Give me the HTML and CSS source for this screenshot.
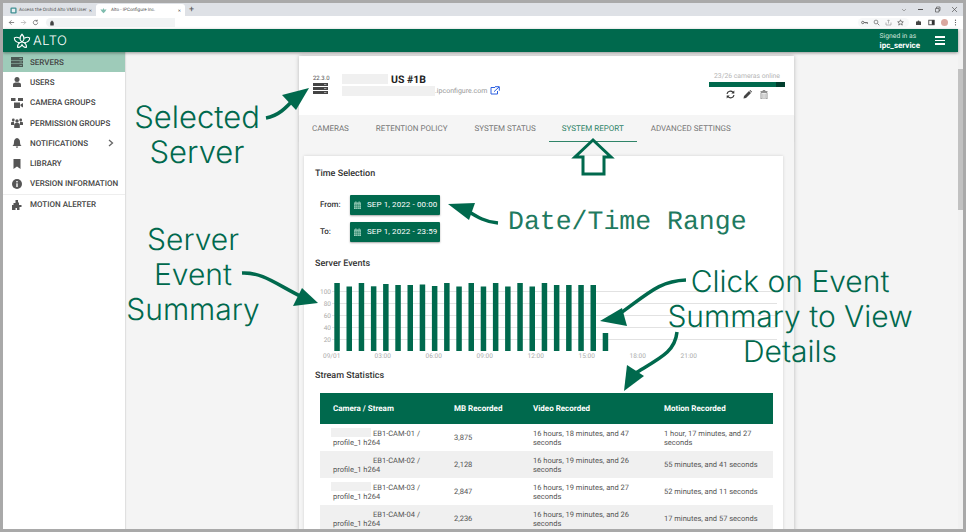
FILE: index.html
```html
<!DOCTYPE html>
<html lang="en">
<head>
    <meta charset="UTF-8">
    <meta name="viewport" content="width=device-width, initial-scale=1.0">
    <title>Alto - IPConfigure Inc.</title>
    <link rel="stylesheet" href="styles.css">
</head>
<body>
    <div class="window">
        <div class="tabbar">
            <div class="tab">
                <svg class="favicon" viewBox="0 0 8 8"><rect x="0.5" y="0.5" width="7" height="7" rx="1.5" fill="#3f8f93"/><rect x="2" y="2" width="4" height="4" fill="#e8eef0"/></svg>
                <span class="tab-title">Access the Orchid Alto VMS User</span>
                <span class="tab-close">&#10005;</span>
            </div>
            <div class="tab tab-active">
                <svg class="favicon" viewBox="0 0 8 8"><path d="M4 1 5 3 7.500 2.500 6 5 4 7 2 5 .5 2.500 3 3Z" fill="#7fbcae"/></svg>
                <span class="tab-title">Alto - IPConfigure Inc.</span>
                <span class="tab-close">&#10005;</span>
            </div>
            <span class="new-tab">+</span>
            <div class="window-buttons">
                <svg width="6" height="6" viewBox="0 0 6 6"><path d="M1 2 3 4 5 2" fill="none" stroke="#888" stroke-width=".7"/></svg>
                <svg width="7" height="7" viewBox="0 0 7 7"><path d="M1 3.500H6" stroke="#444" stroke-width=".9"/></svg>
                <svg width="7" height="7" viewBox="0 0 7 7"><path d="M1.500 2.500H5V6H1.500ZM2.500 2.500V1H6V4.500H5" fill="none" stroke="#555" stroke-width=".7"/></svg>
                <svg width="7" height="7" viewBox="0 0 7 7"><path d="M1 1 6 6M6 1 1 6" stroke="#555" stroke-width=".7"/></svg>
            </div>
        </div>
        <div class="toolbar">
            <svg class="nav-icon" viewBox="0 0 8 8"><path d="M7 4H1.500M4 1.500 1.500 4 4 6.500" fill="none" stroke="#555" stroke-width=".8"/></svg>
            <svg class="nav-icon" viewBox="0 0 8 8"><path d="M1 4H6.500M4 1.500 6.500 4 4 6.500" fill="none" stroke="#aaa" stroke-width=".8"/></svg>
            <svg class="nav-icon" viewBox="0 0 8 8"><path d="M6.500 4A2.500 2.500 0 1 1 5.700 2.200M6 .8V2.500H4.300" fill="none" stroke="#555" stroke-width=".8"/></svg>
            <div class="omnibox">
                <svg width="6" height="6" viewBox="0 0 6 6"><path d="M1.500 2.600H4.500V5.200H1.500ZM2.100 2.600V1.800A.9.900 0 0 1 3.900 1.800V2.600" fill="#444" stroke="#444" stroke-width=".5"/></svg>
            </div>
            <div class="toolbar-right">
                <div class="omni-end">
                    <svg width="7" height="7" viewBox="0 0 7 7"><circle cx="1.800" cy="3.500" r="1.200" fill="none" stroke="#555" stroke-width=".8"/><path d="M3 3.500H6.500V4.800M5 3.500V4.600" fill="none" stroke="#555" stroke-width=".8"/></svg>
                    <svg width="7" height="7" viewBox="0 0 7 7"><circle cx="3" cy="3" r="1.900" fill="none" stroke="#666" stroke-width=".7"/><path d="M4.400 4.400 6.300 6.300" stroke="#666" stroke-width=".8"/></svg>
                    <svg width="7" height="7" viewBox="0 0 7 7"><path d="M1 3.500V6H6V3.500M3.500 4.500V1M2.300 2 3.500 .8 4.700 2" fill="none" stroke="#999" stroke-width=".7"/></svg>
                    <svg width="7" height="7" viewBox="0 0 7 7"><path d="M3.500 .8 4.300 2.700 6.300 2.800 4.800 4.100 5.300 6.100 3.500 5 1.700 6.100 2.200 4.100 .7 2.800 2.700 2.700Z" fill="none" stroke="#555" stroke-width=".7"/></svg>
                </div>
                <svg width="7" height="7" viewBox="0 0 7 7"><path d="M1 2.500H2.500A1 1 0 0 1 4.500 2.500H6V6H1Z" fill="#444"/></svg>
                <svg width="7" height="7" viewBox="0 0 7 7"><rect x=".8" y="1.200" width="5.400" height="4.600" fill="none" stroke="#333" stroke-width=".8"/><rect x="3.800" y="1.200" width="2.400" height="4.600" fill="#333"/></svg>
                <span class="avatar"></span>
                <svg width="3" height="7" viewBox="0 0 3 7"><circle cx="1.500" cy="1.200" r=".6" fill="#444"/><circle cx="1.500" cy="3.500" r=".6" fill="#444"/><circle cx="1.500" cy="5.800" r=".6" fill="#444"/></svg>
            </div>
        </div>

        <div class="app">
            <div class="app-col">
                <header class="app-header">
                    <div class="logo">
                        <svg width="18" height="16" viewBox="0 0 20 17" fill="none" stroke="#fff" stroke-width="1.200"><path d="M10 1C8 3 7.500 5 8 7 8.500 8.500 9.300 9 10 9.500 10.700 9 11.500 8.500 12 7 12.500 5 12 3 10 1Z"/><path d="M7.500 5.500C5 4 3 4 1.500 5 1.500 8 3.500 10 7 10.500 8.200 10.500 9 10 10 9.500 11 10 11.800 10.500 13 10.500 16.500 10 18.500 8 18.500 5 17 4 15 4 12.500 5.500"/><path d="M7.500 10.500C5.500 11.500 5 13 5 15.500 7.500 16 9 15 10 12.500 11 15 12.500 16 15 15.500 15 13 14.500 11.500 12.500 10.500"/></svg>
                        <span class="logo-text">ALTO</span>
                    </div>
                    <div class="signed-in">
                        <span class="signed-label">Signed in as</span>
                        <span class="signed-user">ipc_service</span>
                    </div>
                    <div class="hamburger"><span></span><span></span><span></span></div>
                </header>

                <div class="main">
                    <nav class="sidebar">
                        <a class="nav-item nav-selected">
                            <svg class="side-icon" viewBox="0 0 12 10"><path d="M0 0H12V3H0ZM0 3.500H12V6.500H0ZM0 7H12V10H0Z" fill="#4c5a55"/><path d="M8.500 1.500H11M8.500 5H11M8.500 8.500H11" stroke="#9ecbb9" stroke-width=".6"/></svg>
                            SERVERS
                        </a>
                        <a class="nav-item">
                            <svg class="side-icon" viewBox="0 0 12 10"><circle cx="6" cy="2.500" r="2.500" fill="#555"/><path d="M2 10V7.500C2 6 3.500 5.500 6 5.500S10 6 10 7.500V10Z" fill="#555"/></svg>
                            USERS
                        </a>
                        <a class="nav-item">
                            <svg class="side-icon" viewBox="0 0 12 10"><path d="M0 0H4.500V3H0ZM7 0H12V3H7ZM3 4.500H9V10H3ZM9.500 6.500 12 5V9.500L9.500 8Z" fill="#555"/></svg>
                            CAMERA GROUPS
                        </a>
                        <a class="nav-item">
                            <svg class="side-icon" viewBox="0 0 12 10"><circle cx="6" cy="3" r="1.700" fill="#555"/><circle cx="2.300" cy="2" r="1.400" fill="#555"/><circle cx="9.700" cy="2" r="1.400" fill="#555"/><path d="M0 7V5C0 4 1 3.800 3 3.800V7ZM12 7V5C12 4 11 3.800 9 3.800V7ZM3.200 10V6.500C3.200 5.300 4.500 5 6 5S8.800 5.300 8.800 6.500V10Z" fill="#555"/></svg>
                            PERMISSION GROUPS
                        </a>
                        <a class="nav-item">
                            <svg class="side-icon" viewBox="0 0 12 10"><path d="M6 0C4 .6 3 2 3 4 3 6 2.500 7 1.500 8H10.500C9.500 7 9 6 9 4 9 2 8 .6 6 0ZM4.800 8.500A1.200 1.200 0 0 0 7.200 8.500Z" fill="#555"/></svg>
                            NOTIFICATIONS
                            <svg class="chevron" viewBox="0 0 6 8"><path d="M1 1 4.500 4 1 7" fill="none" stroke="#666" stroke-width="1.300"/></svg>
                        </a>
                        <a class="nav-item">
                            <svg class="side-icon" viewBox="0 0 12 10"><path d="M2.500 0H9.500V10L6 7.500 2.500 10Z" fill="#555"/></svg>
                            LIBRARY
                        </a>
                        <a class="nav-item">
                            <svg class="side-icon" viewBox="0 0 12 10"><circle cx="6" cy="5" r="5" fill="#555"/><rect x="5.300" y="4.300" width="1.400" height="3.700" fill="#fff"/><rect x="5.300" y="2" width="1.400" height="1.400" fill="#fff"/></svg>
                            VERSION INFORMATION
                        </a>
                        <a class="nav-item nav-last">
                            <svg class="side-icon" viewBox="0 0 12 10"><path d="M4.500 0H7V2.500H8V5H10.500V7H8.500V10H6V8H4.500V10H1V5H2.500V3H4.500Z" fill="#555"/></svg>
                            MOTION ALERTER
                        </a>
                    </nav>

                    <section class="content">
                        <div class="panel">
                            <div class="server-head">
                                <div class="server-icon">
                                    <span class="version">22.3.0</span>
                                    <svg width="15" height="11" viewBox="0 0 15 11"><path d="M0 0H15V3H0ZM0 4H15V7H0ZM0 8H15V11H0Z" fill="#444"/><path d="M11 1.500H13.500M11 5.500H13.500M11 9.500H13.500" stroke="#ddd" stroke-width=".6"/></svg>
                                </div>
                                <div class="server-name">
                                    <div class="name-line"><span class="redact redact-name"></span><b>US #1B</b></div>
                                    <div class="url-line">
                                        <span class="redact redact-url"></span>.ipconfigure.com
                                        <svg width="10" height="9" viewBox="0 0 10 9"><path d="M5 1.500H1V8H7.500V5M5 .7H9.300V4.700M9 1 4 5.700" fill="none" stroke="#2a5ee0" stroke-width="1"/></svg>
                                    </div>
                                </div>
                                <div class="server-status">
                                    <span class="online">23/26 cameras online</span>
                                    <div class="online-bar"><div class="online-fill"></div></div>
                                    <div class="server-actions">
                                        <svg width="9" height="9" viewBox="0 0 9 9"><path d="M1 3.800A3.500 3.500 0 0 1 7 2.300M8 5.200A3.500 3.500 0 0 1 2 6.700" fill="none" stroke="#333" stroke-width="1.200"/><path d="M8.300 .5V3.500H5.300ZM.7 8.500V5.500H3.700Z" fill="#333"/></svg>
                                        <svg width="9" height="9" viewBox="0 0 9 9"><path d="M.5 8.500 1 6 6 1 8 3 3 8ZM6.500.5 7.300 0 9 1.700 8.500 2.500Z" fill="#444"/></svg>
                                        <svg width="8" height="9" viewBox="0 0 8 9"><path d="M.5 1.500H7.500M3 1.500V.5H5V1.500M1 2.500H7V9H1Z" fill="none" stroke="#777" stroke-width=".8"/><path d="M2.700 3.500V8M4 3.500V8M5.300 3.500V8" stroke="#999" stroke-width=".6"/></svg>
                                    </div>
                                </div>
                            </div>
                            <div class="tabs">
                                <span class="tab-link">CAMERAS</span>
                                <span class="tab-link">RETENTION POLICY</span>
                                <span class="tab-link">SYSTEM STATUS</span>
                                <span class="tab-link tab-link-active">SYSTEM REPORT</span>
                                <span class="tab-link">ADVANCED SETTINGS</span>
                            </div>
                            <div class="panel-body">
                                <div class="card">
                                    <h3 class="card-title">Time Selection</h3>
                                    <div class="time-row">
                                        <span class="time-label">From:</span>
                                        <button class="date-btn">
                                            <svg width="7" height="8" viewBox="0 0 7 8"><path d="M0 1.500H7V8H0ZM1.500 .3H2.300V1.500H1.500ZM4.700 .3H5.500V1.500H4.700Z" fill="#9fd0bd"/><path d="M0 3H7M1.800 3V8M3.500 3V8M5.200 3V8M0 4.600H7M0 6.300H7" stroke="#00694d" stroke-width=".4"/></svg>
                                            SEP 1, 2022 - 00:00
                                        </button>
                                    </div>
                                    <div class="time-row">
                                        <span class="time-label">To:</span>
                                        <button class="date-btn">
                                            <svg width="7" height="8" viewBox="0 0 7 8"><path d="M0 1.500H7V8H0ZM1.500 .3H2.300V1.500H1.500ZM4.700 .3H5.500V1.500H4.700Z" fill="#9fd0bd"/><path d="M0 3H7M1.800 3V8M3.500 3V8M5.200 3V8M0 4.600H7M0 6.300H7" stroke="#00694d" stroke-width=".4"/></svg>
                                            SEP 1, 2022 - 23:59
                                        </button>
                                    </div>

                                    <h3 class="card-title title-events">Server Events</h3>
                                    <svg class="chart" width="470" height="90" viewBox="0 0 470 90">
                                        <g stroke="#e2e2e2" stroke-width="1">
                                            <line x1="22" y1="20.500" x2="467" y2="20.500"/>
                                            <line x1="22" y1="32.500" x2="467" y2="32.500"/>
                                            <line x1="22" y1="44.500" x2="467" y2="44.500"/>
                                            <line x1="22" y1="56.500" x2="467" y2="56.500"/>
                                            <line x1="22" y1="68.500" x2="467" y2="68.500"/>
                                        </g>
                                        <g class="chart-axis" text-anchor="end">
                                            <text x="21" y="23">100</text>
                                            <text x="21" y="35">80</text>
                                            <text x="21" y="47">60</text>
                                            <text x="21" y="59">40</text>
                                            <text x="21" y="71">20</text>
                                        </g>
                                        <g fill="#00694d">
                                            <rect x="24.300" y="12" width="5.500" height="68"/>
                                            <rect x="36.500" y="15.500" width="5.500" height="64.500"/>
                                            <rect x="48.700" y="12" width="5.500" height="68"/>
                                            <rect x="60.900" y="15.300" width="5.500" height="64.700"/>
                                            <rect x="73.100" y="13" width="5.500" height="67"/>
                                            <rect x="85.300" y="14" width="5.500" height="66"/>
                                            <rect x="97.500" y="14" width="5.500" height="66"/>
                                            <rect x="109.700" y="13.500" width="5.500" height="66.500"/>
                                            <rect x="121.900" y="15" width="5.500" height="65"/>
                                            <rect x="134.100" y="12" width="5.500" height="68"/>
                                            <rect x="146.300" y="15.500" width="5.500" height="64.500"/>
                                            <rect x="158.500" y="12" width="5.500" height="68"/>
                                            <rect x="170.700" y="15.500" width="5.500" height="64.500"/>
                                            <rect x="182.900" y="12" width="5.500" height="68"/>
                                            <rect x="195.100" y="15.500" width="5.500" height="64.500"/>
                                            <rect x="207.300" y="12" width="5.500" height="68"/>
                                            <rect x="219.500" y="15.500" width="5.500" height="64.500"/>
                                            <rect x="231.700" y="12" width="5.500" height="68"/>
                                            <rect x="243.900" y="14" width="5.500" height="66"/>
                                            <rect x="256.100" y="14" width="5.500" height="66"/>
                                            <rect x="268.300" y="14" width="5.500" height="66"/>
                                            <rect x="280.500" y="14" width="5.500" height="66"/>
                                            <rect x="292.700" y="62" width="5.500" height="18"/>
                                        </g>
                                        <g class="chart-axis" text-anchor="middle">
                                            <text x="21.700" y="87">09/01</text>
                                            <text x="72.700" y="87">03:00</text>
                                            <text x="123.700" y="87">06:00</text>
                                            <text x="174.700" y="87">09:00</text>
                                            <text x="225.700" y="87">12:00</text>
                                            <text x="276.700" y="87">15:00</text>
                                            <text x="327.700" y="87">18:00</text>
                                            <text x="378.700" y="87">21:00</text>
                                        </g>
                                    </svg>

                                    <h3 class="card-title title-stream">Stream Statistics</h3>
                                    <table class="stats">
                                        <thead>
                                            <tr><th>Camera / Stream</th><th>MB Recorded</th><th>Video Recorded</th><th>Motion Recorded</th></tr>
                                        </thead>
                                        <tbody>
                                            <tr>
                                                <td><span class="redact redact-cam"></span>EB1-CAM-01 /<br>profile_1 h264</td>
                                                <td>3,875</td>
                                                <td>16 hours, 18 minutes, and 47 seconds</td>
                                                <td>1 hour, 17 minutes, and 27 seconds</td>
                                            </tr>
                                            <tr>
                                                <td><span class="redact redact-cam"></span>EB1-CAM-02 /<br>profile_1 h264</td>
                                                <td>2,128</td>
                                                <td>16 hours, 19 minutes, and 26 seconds</td>
                                                <td>55 minutes, and 41 seconds</td>
                                            </tr>
                                            <tr>
                                                <td><span class="redact redact-cam"></span>EB1-CAM-03 /<br>profile_1 h264</td>
                                                <td>2,847</td>
                                                <td>16 hours, 19 minutes, and 27 seconds</td>
                                                <td>52 minutes, and 11 seconds</td>
                                            </tr>
                                            <tr>
                                                <td><span class="redact redact-cam"></span>EB1-CAM-04 /<br>profile_1 h264</td>
                                                <td>2,236</td>
                                                <td>16 hours, 19 minutes, and 26 seconds</td>
                                                <td>17 minutes, and 57 seconds</td>
                                            </tr>
                                        </tbody>
                                    </table>
                                </div>
                            </div>
                        </div>
                    </section>
                </div>
            </div>
            <div class="scrollbar"><div class="scroll-thumb"></div></div>
        </div>
    </div>

    <!-- annotations drawn on top of the screenshot -->
    <svg class="arrows" width="966" height="532" viewBox="0 0 966 532">
        <g fill="none" stroke="#00694d" stroke-width="3.500">
            <path d="M266 118C278 116 286 108 295 98"/>
            <path d="M498 223C484 222 476 216 463 208"/>
            <path d="M242 273C262 272 276 284 302 297"/>
            <path d="M686 280C660 281 650 292 618 315"/>
            <path d="M677 332C675 352 660 358 634 374"/>
        </g>
        <g fill="#00694d">
            <path d="M309 88 282 95 296 110Z"/>
            <path d="M448 204 475 203 469 220Z"/>
            <path d="M318 303 293 306 302 288Z"/>
            <path d="M600 321 622 308 627 326Z"/>
            <path d="M624 391 627 365 644 376Z"/>
        </g>
        <path d="M593 140 575 157H583V174H604V157H611Z" fill="none" stroke="#00694d" stroke-width="3"/>
    </svg>
    <div class="note note-selected">Selected<br>Server</div>
    <div class="note note-range">Date/Time Range</div>
    <div class="note note-summary">Server<br>Event<br>Summary</div>
    <div class="note note-click">Click on Event<br>Summary to View<br>Details</div>
</body>
</html>
```

FILE: styles.css
```css
body {
    margin: 0;
    background-color: #a9a9a9;
    font-family: Roboto, "Liberation Sans", sans-serif;
    text-rendering: geometricPrecision;
    overflow: hidden;
}

.window {
    height: 526px;
    margin: 3px;
    display: flex;
    flex-direction: column;
    overflow: hidden;
    background-color: #fff;
}

/* browser chrome */
.tabbar {
    height: 13px;
    flex: none;
    display: flex;
    align-items: flex-end;
    background-color: #dee1e6;
    padding-left: 4px;
    font-size: 4.600px;
    color: #555;
}

.tab {
    width: 89px;
    height: 12px;
    display: flex;
    align-items: center;
    gap: 2px;
    padding: 0 4px 0 3px;
    box-sizing: border-box;
}

.tab-active {
    gap: 4px;
    padding-left: 4px;
    background-color: #fff;
    border-radius: 3px 3px 0 0;
}

.favicon {
    width: 7px;
    height: 7px;
    flex: none;
}

.tab-title {
    flex: 1;
    white-space: nowrap;
}

.tab-close {
    font-size: 4px;
    color: #444;
}

.new-tab {
    align-self: center;
    margin-left: 4px;
    font-size: 9px;
    color: #555;
}

.window-buttons {
    margin-left: auto;
    align-self: center;
    display: flex;
    align-items: center;
    gap: 10px;
    padding-right: 5px;
}

.toolbar {
    height: 13px;
    flex: none;
    display: flex;
    align-items: center;
    gap: 5px;
    padding: 0 6px 0 5px;
    box-sizing: border-box;
}

.nav-icon {
    width: 7px;
    height: 7px;
}

.omnibox {
    width: 129px;
    height: 9px;
    margin-left: 2px;
    display: flex;
    align-items: center;
    padding-left: 3px;
    box-sizing: border-box;
    background-color: #f1f3f4;
    border-radius: 5px 0 0 5px;
}

.toolbar-right {
    margin-left: auto;
    display: flex;
    align-items: center;
    gap: 6px;
}

.omni-end {
    height: 9px;
    display: flex;
    align-items: center;
    gap: 5px;
    padding: 0 5px 0 3px;
    background-color: #f7f8f9;
    border-radius: 5px;
}

.avatar {
    width: 7px;
    height: 7px;
    border-radius: 50%;
    background-color: #d9a79f;
}

/* app */
.app {
    flex: 1;
    min-height: 0;
    display: flex;
}

.app-col {
    flex: 1;
    min-width: 0;
    display: flex;
    flex-direction: column;
}

.scrollbar {
    width: 5px;
    flex: none;
    padding-top: 40px;
    background-color: #f1f1f1;
}

.scroll-thumb {
    height: 141px;
    background-color: #c1c1c1;
}

.app-header {
    height: 23px;
    flex: none;
    display: flex;
    align-items: center;
    background-color: #00694d;
    box-shadow: 0 1px 3px rgba(0, 0, 0, 0.4);
    position: relative;
    z-index: 2;
    color: #fff;
}

.logo {
    display: flex;
    align-items: center;
    gap: 2px;
    margin-left: 10px;
}

.logo-text {
    font-family: Inter, sans-serif;
    font-weight: 300;
    font-size: 13px;
    letter-spacing: 0.4px;
}

.signed-in {
    margin-left: auto;
    display: flex;
    flex-direction: column;
    font-size: 6.800px;
    line-height: 9px;
}

.signed-label {
    color: #cfe4dc;
}

.signed-user {
    font-weight: 700;
    font-size: 8px;
}

.hamburger {
    display: flex;
    flex-direction: column;
    gap: 2px;
    margin: 0 13px 0 15px;
}

.hamburger span {
    display: block;
    width: 10px;
    height: 1.500px;
    background-color: #fff;
}

.main {
    flex: 1;
    min-height: 0;
    display: flex;
    background-color: #f4f4f4;
}

.sidebar {
    width: 122px;
    flex: none;
    background-color: #fff;
    box-shadow: 1px 0 1px rgba(0, 0, 0, 0.08);
    font-size: 8px;
    font-weight: 500;
    color: #444;
}

.nav-item {
    height: 20.300px;
    box-sizing: border-box;
    display: flex;
    align-items: center;
    gap: 7px;
    padding-left: 8px;
    white-space: nowrap;
}

.nav-selected {
    background-color: #9ecbb9;
}

.nav-last {
    border-top: 1px solid #eee;
}

.side-icon {
    width: 12px;
    height: 10px;
    flex: none;
}

.chevron {
    width: 6px;
    height: 8px;
    margin-left: 13px;
}

.content {
    flex: 1;
    min-width: 0;
    overflow: hidden;
    padding: 4px 0 0 174px;
}

.panel {
    width: 495px;
    background-color: #fff;
    box-shadow: 0 0 4px rgba(0, 0, 0, 0.25);
}

.server-head {
    height: 59px;
    display: flex;
    padding: 0 9px 0 14px;
    box-sizing: border-box;
}

.server-icon {
    width: 29px;
    flex: none;
    padding-top: 19px;
    display: flex;
    flex-direction: column;
    align-items: flex-start;
    font-size: 6px;
    line-height: 7px;
    color: #555;
}

.version {
    margin-bottom: 1px;
}

.server-name {
    flex: 1;
    padding-top: 17px;
    color: #222;
}

.name-line {
    display: flex;
    align-items: center;
    height: 12px;
    font-size: 10.500px;
}

.url-line {
    display: flex;
    align-items: center;
    height: 11px;
    font-size: 7px;
    color: #999;
}

.url-line svg {
    margin-left: 3px;
}

.redact {
    display: inline-block;
    background-color: #f0f0f0;
}

.redact-name {
    width: 46px;
    height: 10px;
    margin-right: 3px;
}

.redact-url {
    width: 93px;
    height: 10px;
}

.redact-cam {
    width: 40px;
    height: 9px;
    margin: 0 2px 0 -2px;
    vertical-align: -1px;
}

.server-status {
    width: 76px;
    flex: none;
    padding-top: 16px;
    display: flex;
    flex-direction: column;
    align-items: center;
    font-size: 6.800px;
    color: #b5b5b5;
}

.online {
    line-height: 9px;
}

.online-bar {
    width: 76px;
    height: 5px;
    margin-top: 1px;
    background-color: #003d2d;
}

.online-fill {
    width: 88%;
    height: 100%;
    background-color: #00694d;
}

.server-actions {
    display: flex;
    gap: 8px;
    margin-top: 3px;
}

.tabs {
    height: 26px;
    display: flex;
    background-color: #f5f5f5;
    box-shadow: 0 1px 1px rgba(0, 0, 0, 0.08);
    padding-left: 13px;
    font-size: 8px;
    color: #777;
}

.tab-link {
    display: flex;
    align-items: center;
    margin-right: 27px;
    white-space: nowrap;
}

.tab-link-active {
    color: #2f8468;
    box-shadow: 0 1px 0 #2f8468;
    padding: 0 13px;
    margin: 0 14px 0 -14px;
}

.panel-body {
    padding: 15px 11px 0 5px;
    background-color: #f5f5f5;
}

.card {
    padding: 12px 10px 0 11px;
    background-color: #fff;
    box-shadow: 0 0 3px rgba(0, 0, 0, 0.15);
}

.card-title {
    margin: 0;
    font-size: 9px;
    line-height: 12px;
    font-weight: 500;
    color: #333;
}

.time-row {
    display: flex;
    align-items: center;
    height: 21px;
    margin-top: 6px;
    padding-left: 5px;
}

.card-title + .time-row {
    margin-top: 14px;
}

.time-label {
    width: 30px;
    font-size: 8px;
    font-weight: 500;
    color: #333;
}

.date-btn {
    width: 90px;
    height: 20px;
    display: flex;
    align-items: center;
    gap: 6px;
    padding: 0 0 0 4px;
    border: none;
    border-radius: 1px;
    background-color: #00694d;
    box-shadow: 0 1px 2px rgba(0, 0, 0, 0.35);
    color: #fff;
    font-family: Roboto, sans-serif;
    font-size: 8px;
    letter-spacing: 0.1px;
    white-space: nowrap;
}

.title-events {
    margin-top: 16px;
}

.chart {
    display: block;
    margin: 1px 0 0 -5px;
}

.chart-axis {
    font-size: 6.500px;
    fill: #aaa;
}

.title-stream {
    margin-top: 9px;
}

.stats {
    width: 453px;
    margin: 11px 0 0 5px;
    border-collapse: collapse;
    table-layout: fixed;
    font-size: 7.500px;
    line-height: 9px;
    color: #555;
}

.stats th:nth-child(1) { width: 121px; }
.stats th:nth-child(2) { width: 79px; }
.stats th:nth-child(3) { width: 131px; }

.stats th {
    height: 31px;
    box-sizing: border-box;
    padding: 0 13px;
    background-color: #00694d;
    color: #fff;
    font-size: 8px;
    font-weight: 700;
    text-align: left;
}

.stats td {
    height: 27px;
    padding: 0 13px;
    box-sizing: border-box;
}

.stats tbody tr:nth-child(even) {
    background-color: #f0f0f0;
}

/* annotations */
.arrows {
    position: absolute;
    top: 0;
    left: 0;
}

.note {
    position: absolute;
    color: #00694d;
    font-family: Inter, sans-serif;
    font-weight: 300;
    font-size: 30px;
    line-height: 35px;
    text-align: center;
    white-space: nowrap;
}

.note-selected {
    left: 127px;
    top: 100px;
    width: 140px;
    font-size: 31px;
}

.note-summary {
    left: 118px;
    top: 223px;
    width: 150px;
}

.note-click {
    left: 650px;
    top: 265px;
    width: 280px;
}

.note-range {
    left: 508px;
    top: 205px;
    color: #1f7a60;
    font-family: "Liberation Mono", monospace;
    font-weight: 400;
    font-size: 26.500px;
}
```
